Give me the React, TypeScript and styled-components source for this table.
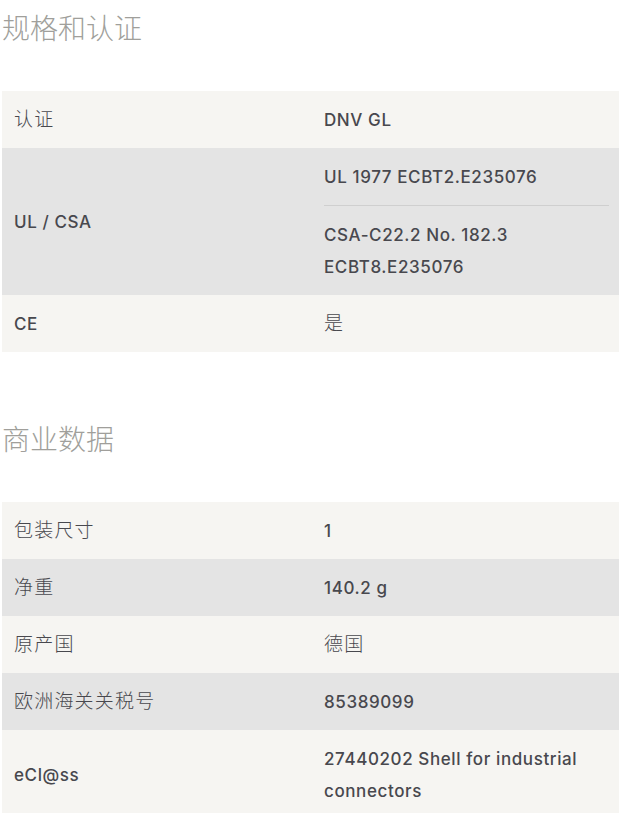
import React from 'react';
import styled, { createGlobalStyle } from 'styled-components';

const GlobalStyle = createGlobalStyle`
  html, body {
    margin: 0;
    padding: 0;
    background: #ffffff;
  }
  body {
    font-family: Inter, "Noto Sans CJK SC", sans-serif;
    color: #48484e;
  }
`;

type Row = { label: string; values: string[][] };

const specs: Row[] = [
  { label: '认证', values: [['DNV GL']] },
  { label: 'UL / CSA', values: [['UL 1977 ECBT2.E235076'], ['CSA-C22.2 No. 182.3', 'ECBT8.E235076']] },
  { label: 'CE', values: [['是']] },
];

const commercial: Row[] = [
  { label: '包装尺寸', values: [['1']] },
  { label: '净重', values: [['140.2 g']] },
  { label: '原产国', values: [['德国']] },
  { label: '欧洲海关关税号', values: [['85389099']] },
  { label: 'eCl@ss', values: [['27440202 Shell for industrial connectors']] },
];

const isCjk = (s: string) => /[\u4e00-\u9fff]/.test(s);

export default function App() {
  return (
    <>
      <GlobalStyle />
      <Page>
        <Section title="规格和认证" rows={specs} />
        <Section title="商业数据" rows={commercial} />
      </Page>
    </>
  );
}

function Section({ title, rows }: { title: string; rows: Row[] }) {
  return (
    <Block>
      <Heading>{title}</Heading>
      <Table>
        {rows.map((row, i) => (
          <TableRow key={row.label} $shade={i % 2 === 1}>
            <Label $cjk={isCjk(row.label)}>{row.label}</Label>
            <Value>
              {row.values.map((lines, j) => (
                <Entry key={j} $cjk={isCjk(lines.join(''))}>
                  {lines.map((l) => (
                    <div key={l}>{l}</div>
                  ))}
                </Entry>
              ))}
            </Value>
          </TableRow>
        ))}
      </Table>
    </Block>
  );
}

const Page = styled.div`
  padding: 8px 0 0 2px;
  width: 617px;
  display: flex;
  flex-direction: column;
  gap: 67px;
`;

const Block = styled.section`
  display: flex;
  flex-direction: column;
`;

const Heading = styled.h2`
  margin: 0 0 44px;
  font-family: "Noto Sans CJK SC", sans-serif;
  font-size: 28px;
  font-weight: 300;
  line-height: 39px;
  color: #a09f9b;
`;

const Table = styled.div`
  display: flex;
  flex-direction: column;
`;

const TableRow = styled.div<{ $shade: boolean }>`
  display: grid;
  grid-template-columns: 310px 1fr;
  align-items: center;
  background: ${(p) => (p.$shade ? '#e4e4e4' : '#f6f5f2')};
`;

const Label = styled.div<{ $cjk: boolean }>`
  padding: 12.5px 12px;
  font-size: ${(p) => (p.$cjk ? '19px' : '17px')};
  font-weight: ${(p) => (p.$cjk ? 300 : 500)};
  letter-spacing: ${(p) => (p.$cjk ? '1.2px' : '0.6px')};
  line-height: 32px;
`;

const Value = styled.div`
  padding: 0 10px 0 12px;
`;

const Entry = styled.div<{ $cjk: boolean }>`
  padding: 12.5px 0;
  font-size: ${(p) => (p.$cjk ? '19px' : '17px')};
  font-weight: ${(p) => (p.$cjk ? 300 : 500)};
  letter-spacing: ${(p) => (p.$cjk ? '1.2px' : '0.6px')};
  line-height: 32px;
  & + & {
    border-top: 1px solid #cfcfcf;
  }
`;
